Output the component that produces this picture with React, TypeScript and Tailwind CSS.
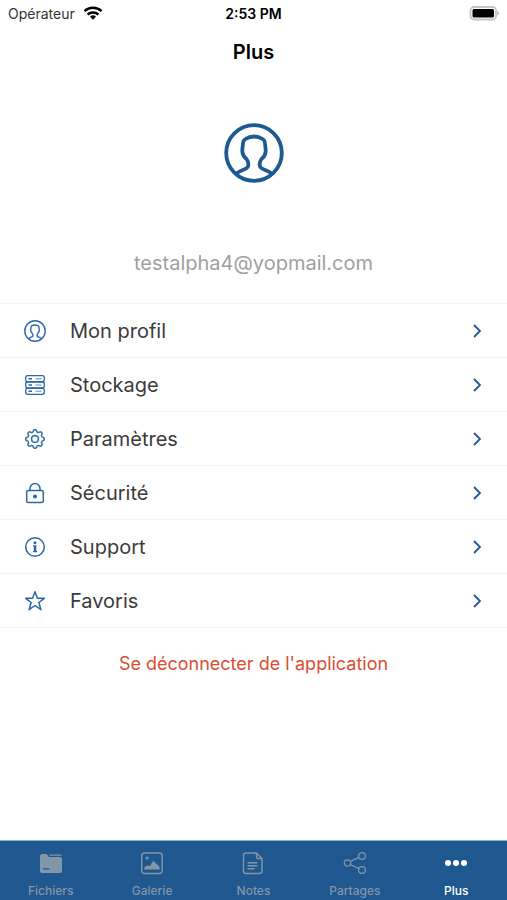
import type { ReactNode } from "react";
import { BsGear } from "react-icons/bs";

function ProfileIcon({ className, strokeWidth }: { className: string; strokeWidth: number }) {
  return (
    <svg viewBox="0 0 60 60" className={className} fill="none" stroke="currentColor" strokeWidth={strokeWidth} strokeLinejoin="round" aria-hidden="true">
      <circle cx="30" cy="30" r="27.8" />
      <path d="M12.500 50.500C15.500 47.500 23 46.500 24 43.500C24.800 41 24.300 38.500 22.500 36C20 34 18.800 32 18.500 29.500C18 27 18.500 25 18.800 22.500C18.800 19 19.800 16.500 22 15.700C24.500 14 27 13.500 30 13.500C33 13.500 35.500 14 38 15.700C40.200 16.500 41.200 19 41.200 22.500C41.500 25 42 27 41.500 29.500C41.200 32 40 34 37.500 36C35.700 38.500 35.200 41 36 43.500C37 46.500 44.500 47.500 47.500 50.500" />
    </svg>
  );
}

function StorageIcon() {
  return (
    <svg viewBox="0 0 22 22" className="size-[22px]" fill="none" stroke="currentColor" strokeWidth="1.300" aria-hidden="true">
      <rect x="1.700" y="1.700" width="18.600" height="6" rx="2" />
      <rect x="1.700" y="8" width="18.600" height="6" rx="2" />
      <rect x="1.700" y="14.300" width="18.600" height="6" rx="2" />
      <path d="M4.500 4.700h3.500M4.500 11h3.500M4.500 17.300h3.500" strokeWidth="1.500" />
      <path d="M11.500 4.700h6M11.500 11h6M11.500 17.300h6" strokeWidth="1.500" opacity="0.5" />
    </svg>
  );
}

function LockIcon() {
  return (
    <svg viewBox="0 0 22 22" className="size-[22px]" fill="none" stroke="currentColor" strokeWidth="1.500" aria-hidden="true">
      <rect x="2.700" y="8.500" width="16.600" height="12" rx="1.500" />
      <path d="M6 8.500V6.500a5 5 0 0 1 10 0v2" />
      <circle cx="11" cy="14.500" r="2" fill="currentColor" stroke="none" />
    </svg>
  );
}

function InfoIcon() {
  return (
    <svg viewBox="0 0 22 22" className="size-[22px]" fill="none" stroke="currentColor" strokeWidth="1.500" aria-hidden="true">
      <circle cx="11" cy="11" r="9.300" />
      <circle cx="11" cy="6.800" r="1.500" fill="currentColor" stroke="none" />
      <path d="M9 9.300h3.300V15H13v1.200H9V15h.8v-4.500H9z" fill="currentColor" stroke="none" />
    </svg>
  );
}

function StarIcon() {
  return (
    <svg viewBox="0 0 22 22" className="size-[22px]" fill="none" stroke="currentColor" strokeWidth="1.500" strokeLinejoin="round" aria-hidden="true">
      <path d="M11 1.700L13.400 8.300H20.300L14.900 12.500L16.900 19.700L11 15.500L5.100 19.700L7.100 12.500L1.700 8.300H8.600Z" />
    </svg>
  );
}

function FolderIcon() {
  return (
    <svg viewBox="0 0 24 24" className="size-6" fill="currentColor" aria-hidden="true">
      <path d="M3 3h4c.6 0 1 .3 1.300.7L10 6h11c1.100 0 2 .8 2 1.900V20c0 1.100-.9 2-2 2H3c-1.100 0-2-.9-2-2V5c0-1.100.9-2 2-2zM4 17.300v1.200h6.500v-1.200z" fillRule="evenodd" />
      <path d="M10 3.500h11c1 0 1.800.7 1.900 1.700-.6-.4-1.200-.5-1.900-.5H11z" />
    </svg>
  );
}

function GalleryIcon() {
  return (
    <svg viewBox="0 0 24 24" className="size-6" fill="none" stroke="currentColor" strokeWidth="1.400" aria-hidden="true">
      <rect x="1.700" y="2" width="20.500" height="20.500" rx="3" />
      <circle cx="7" cy="7" r="1.500" fill="currentColor" stroke="none" />
      <path d="M4 18.500c0-2 2-4 3.500-4 1 0 1.500.8 2 .8 1 0 2.500-5 4-5 1.300 0 1.800 2.200 3 2.700 2 .8 3.500 3.500 3.500 5.500z" fill="currentColor" stroke="none" />
    </svg>
  );
}

function NotesIcon() {
  return (
    <svg viewBox="0 0 24 24" className="size-6" fill="none" stroke="currentColor" strokeWidth="1.400" strokeLinejoin="round" aria-hidden="true">
      <path d="M5 2h10.500l5.500 5.500V20c0 1.400-1 2.500-2.500 2.500H5c-1.500 0-2.500-1-2.500-2.500V4.500C2.500 3 3.500 2 5 2z" />
      <path d="M15.500 2v4c0 1 .5 1.500 1.500 1.500h4M6.500 11.700h10M6.500 14.700h10M6.500 17.700h7" />
    </svg>
  );
}

function ShareIcon() {
  return (
    <svg viewBox="0 0 24 24" className="size-6" fill="none" stroke="currentColor" strokeWidth="1.300" aria-hidden="true">
      <circle cx="4.500" cy="12" r="3.200" />
      <circle cx="19" cy="5" r="3.400" />
      <circle cx="19" cy="19" r="3.400" />
      <path d="M7.300 10.500l8.600-4.200M7.300 13.500l8.600 4.200" />
    </svg>
  );
}

function DotsIcon() {
  return (
    <svg viewBox="0 0 24 24" className="size-6" fill="currentColor" aria-hidden="true">
      <circle cx="4" cy="12" r="3" />
      <circle cx="12" cy="12" r="3" />
      <circle cx="20" cy="12" r="3" />
    </svg>
  );
}

const menu: { label: string; icon: ReactNode }[] = [
  { label: "Mon profil", icon: <ProfileIcon className="size-[22px]" strokeWidth={3.8} /> },
  { label: "Stockage", icon: <StorageIcon /> },
  { label: "Paramètres", icon: <BsGear className="size-5 stroke-[0.2]" aria-hidden="true" /> },
  { label: "Sécurité", icon: <LockIcon /> },
  { label: "Support", icon: <InfoIcon /> },
  { label: "Favoris", icon: <StarIcon /> },
];

const tabs: { label: string; icon: ReactNode; active?: boolean }[] = [
  { label: "Fichiers", icon: <FolderIcon /> },
  { label: "Galerie", icon: <GalleryIcon /> },
  { label: "Notes", icon: <NotesIcon /> },
  { label: "Partages", icon: <ShareIcon /> },
  { label: "Plus", icon: <DotsIcon />, active: true },
];

function StatusBar() {
  return (
    <div className="grid grid-cols-3 items-center h-7 px-2 pb-0.5 text-[14px] text-black">
      <div className="flex items-center gap-2">
        <span className="text-[#333]">Opérateur</span>
        <svg viewBox="0 0 20 14" className="w-5 h-3.5" fill="none" stroke="currentColor" strokeWidth="2.500" aria-label="Wi-Fi">
          <path d="M1.500 5.200a12.300 12.300 0 0 1 17 0M4.600 8.500a8 8 0 0 1 10.800 0" />
          <path d="M10 13.800l-3-3.100a4.300 4.300 0 0 1 6 0z" fill="currentColor" stroke="none" />
        </svg>
      </div>
      <span className="text-center font-semibold">2:53 PM</span>
      <svg viewBox="0 0 31 15" className="justify-self-end w-[31px] h-[15px]" aria-label="Batterie">
        <rect x="2.500" y="1" width="25.500" height="12.500" rx="3.500" fill="none" stroke="#c4c4c4" strokeWidth="1.800" />
        <rect x="4.500" y="3" width="21.500" height="8.500" rx="1.500" fill="#000" />
        <path d="M29.300 5v4.500c2-.8 2-3.700 0-4.500z" fill="#aaa" />
      </svg>
    </div>
  );
}

export default function App() {
  return (
    <div className="flex flex-col min-h-screen bg-white font-['Inter',sans-serif]">
      <header>
        <StatusBar />
        <h1 className="py-2 text-center text-[20px] leading-8 font-semibold text-black">Plus</h1>
      </header>

      <main className="flex-1">
        <section className="flex flex-col items-center pt-[47px] pb-6">
          <ProfileIcon className="size-[60px] text-[#1e5a92]" strokeWidth={3.8} />
          <p className="mt-16 text-[20px] leading-8 text-[#a0a0a0]">testalpha4@yopmail.com</p>
        </section>

        <ul className="border-t border-[#f3f3f3]">
          {menu.map((item) => (
            <li key={item.label} className="border-b border-[#f3f3f3]">
              <button type="button" className="flex items-center w-full h-[53px] px-6 text-left text-[#2b68a5]">
                <span className="flex justify-center w-[22px]">{item.icon}</span>
                <span className="flex-1 pl-6 text-[20px] text-[#3b3b3b]">{item.label}</span>
                <svg viewBox="0 0 12 16" className="w-3 h-4" fill="none" stroke="#1e5a92" strokeWidth="1.800" aria-hidden="true">
                  <path d="M3 2l6 6-6 6" />
                </svg>
              </button>
            </li>
          ))}
        </ul>

        <div className="flex justify-center pt-5">
          <button type="button" className="text-[18px] leading-8 text-[#d84f31]">
            Se déconnecter de l'application
          </button>
        </div>
      </main>

      <nav className="grid grid-cols-5 h-[60px] border-t border-[#8fb3cf] bg-[#1e588e]">
        {tabs.map((tab) => (
          <a
            key={tab.label}
            href="#"
            aria-current={tab.active ? "page" : undefined}
            className={`flex flex-col items-center gap-1.5 pt-2.5 text-[12px] leading-5 font-medium ${
              tab.active ? "text-white" : "text-[#8395a8]"
            }`}
          >
            {tab.icon}
            {tab.label}
          </a>
        ))}
      </nav>
    </div>
  );
}
